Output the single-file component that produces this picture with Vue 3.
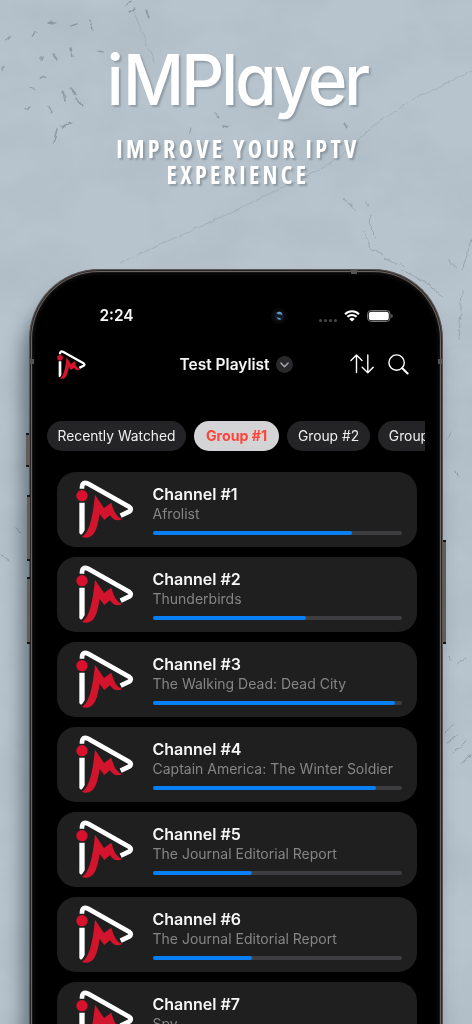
<script setup>
const groups = [
  { name: 'Recently Watched', kind: 'recent' },
  { name: 'Group #1', kind: 'active' },
  { name: 'Group #2', kind: '' },
  { name: 'Group #3', kind: '' },
]
const channels = [
  { show: 'Afrolist', progress: 80 },
  { show: 'Thunderbirds', progress: 61.5 },
  { show: 'The Walking Dead: Dead City', progress: 97.5 },
  { show: 'Captain America: The Winter Soldier', progress: 89.8 },
  { show: 'The Journal Editorial Report', progress: 39.8 },
  { show: 'The Journal Editorial Report', progress: 39.8 },
  { show: 'Spy', progress: 50 },
]
</script>

<template>
  <main class="page">
    <svg class="stone" viewBox="0 0 472 1024" aria-hidden="true">
      <defs>
        <filter id="mottle" x="0" y="0" width="100%" height="100%">
          <feTurbulence type="fractalNoise" baseFrequency="0.012 0.016" numOctaves="6" seed="8" />
          <feColorMatrix values="0 0 0 0 .38  0 0 0 0 .44  0 0 0 0 .49  .8 0 0 0 -.3" />
        </filter>
        <filter id="rough" x="-10%" y="-10%" width="120%" height="120%">
          <feTurbulence type="fractalNoise" baseFrequency="0.12" numOctaves="3" seed="4" />
          <feDisplacementMap in="SourceGraphic" scale="5" xChannelSelector="R" yChannelSelector="G" />
        </filter>
      </defs>
      <rect width="472" height="1024" fill="#b8c4cd" />
      <rect width="472" height="1024" filter="url(#mottle)" />
      <g fill="none" stroke="#6f7b84" stroke-width=".8" opacity=".5" filter="url(#rough)">
        <path d="M472 71L414 99 373 126 340 158 300 180 242 207 200 227 170 240 120 263" opacity=".65" />
        <path d="M344 198L357 213M365 201L368 206M371 215L370 226 376 239M363 231L371 248 383 256M384 258L405 266M402 270L425 282 442 297M448 260L457 268M472 240L462 270M462 290L459 340" />
        <path d="M133 10L140 27 146 42 154 63" opacity=".6" />
      </g>
      <g fill="none" stroke="#5d6971" stroke-width="1.6" stroke-linecap="round" opacity=".45" filter="url(#rough)">
        <path d="M127 6L132 2M129 12L135 9M145 10L149 17M48 23L55 24M70 26L77 24M89 20L93 29M37 31L31 36M54 53L57 60M71 48L73 57M98 51L103 52M42 57L41 60M31 88L35 89M40 79L45 77M25 109L31 107M63 91L65 101M71 88L76 94M77 97L82 106M49 107L52 112M57 129L53 143M62 127L71 122M6 40L10 37M2 70L4 66M190 128L189 133M223 126L228 127M215 114L219 117M345 123L348 128" stroke-width="1.5" />
        <path d="M445 733L454 725M447 743L458 735M452 754L466 741M461 763L470 755M449 657L451 660M459 663L466 658M2 555L10 561M16 528L22 532M456 470L458 476M448 438L451 433" stroke-width="1" />
      </g>
    </svg>

    <header class="hero">
      <h1><span>i</span>MPlayer</h1>
      <p>IMPROVE YOUR IPTV<br>EXPERIENCE</p>
    </header>

    <section class="phone">
      <i class="key mute"></i><i class="key up"></i><i class="key down"></i><i class="key power"></i>
      <i class="band top"></i><i class="band left"></i><i class="band right"></i>
      <div class="screen">
        <div class="status">
          <time>2:24</time>
          <span class="camera">
            <svg viewBox="0 0 16 16"><circle cx="8" cy="8" r="8" fill="#090909" /><circle cx="8" cy="8" r="4.8" fill="#101b2a" /><path d="M5.5 5Q8 3 10.5 4.5L11.5 7.5Q9 5.5 7.5 6.5ZM5.5 9.5Q8 13 10.5 11Q8.5 9 5.5 9.5Z" fill="#6299c2" /></svg>
          </span>
          <span class="signal"><i></i><i></i><i></i><i></i></span>
          <svg class="wifi" viewBox="0 0 16 12">
            <path d="M1 4.2A10 10 0 0 1 15 4.2M3.4 6.8A6.5 6.5 0 0 1 12.6 6.8" fill="none" stroke="#fff" stroke-width="2" />
            <path d="M8 11.6L5.3 8.9A4 4 0 0 1 10.7 8.9Z" fill="#fff" />
          </svg>
          <svg class="battery" viewBox="0 0 26 12">
            <rect x=".5" y=".5" width="22.6" height="11" rx="3.7" fill="none" stroke="#777" />
            <rect x="1.8" y="1.8" width="20" height="8.4" rx="2.5" fill="#fff" />
            <path d="M24.4 4.1Q25.7 4.6 25.7 6T24.4 7.9Z" fill="#777" />
          </svg>
        </div>

        <nav class="toolbar">
          <svg class="logo small" viewBox="47 31 174 174"><use href="#im-mark" /></svg>
          <strong>Test Playlist</strong>
          <svg class="chevron" viewBox="0 0 17 17"><circle cx="8.5" cy="8.5" r="8.5" fill="#29292c" /><path d="M4.9 7L8.5 10.7 12.1 7" fill="none" stroke="#aaaab0" stroke-width="1.4" stroke-linecap="round" stroke-linejoin="round" /></svg>
          <svg class="sort" viewBox="0 0 24 20"><path d="M6.5 18.5V1M1 6.5L6.5 1 12 6.5M17.8 1V18.7M12.2 13.2L17.8 18.7 23.2 13.2" fill="none" stroke="#fff" stroke-width="1.4" stroke-linecap="round" stroke-linejoin="round" /></svg>
          <svg class="search" viewBox="0 0 21 21"><circle cx="8.6" cy="8.6" r="7.7" fill="none" stroke="#fff" stroke-width="1.4" /><path d="M14.3 14.3L19.6 19.5" stroke="#fff" stroke-width="2" stroke-linecap="round" /></svg>
        </nav>

        <div class="groups">
          <span v-for="g in groups" :key="g.name" :class="['pill', g.kind]">{{ g.name }}</span>
        </div>

        <div class="channels">
          <article v-for="(c, i) in channels" :key="i" class="card">
            <svg class="logo" viewBox="47 31 174 174">
              <g v-if="i === 0" id="im-mark">
                <path d="M65 57V53Q66 34 83 42L206 111Q217 119 206 126L181 138" fill="none" stroke="#fff" stroke-width="14" />
                <path d="M57 99H73V181Q66 195 62 195Q57 194 57 188Z" fill="#fff" />
                <circle cx="65" cy="78" r="17" fill="#d8122c" />
                <path d="M65 201C86 190 97 145 104 75L131 115 153 99Q164 143 186 148Q163 160 149 137L132 151 118 133C111 180 100 206 76 204Q70 204 65 201Z" fill="#d3142d" />
              </g>
              <use v-else href="#im-mark" />
            </svg>
            <div class="info">
              <h2>Channel #{{ i + 1 }}</h2>
              <p>{{ c.show }}</p>
              <div class="track"><i :style="{ width: c.progress + '%' }"></i></div>
            </div>
          </article>
        </div>
      </div>
    </section>
  </main>
</template>

<style>
body { margin: 0; overflow: hidden; }
</style>

<style scoped>
* { box-sizing: border-box; }
.page { position: relative; width: 472px; height: 1024px; overflow: hidden; font-family: Inter, "Liberation Sans", sans-serif; background: #b5c2cc; }
.stone { position: absolute; inset: 0; width: 472px; height: 1024px; }
.hero { position: relative; height: 269px; padding-top: 39px; color: #fff; text-align: center; }
h1 { margin: 0; height: 82px; font-size: 70px; line-height: 82px; font-weight: 550; letter-spacing: -3.1px; font-feature-settings: "cv11"; text-shadow: 2px 2px 2px #788590a0; white-space: nowrap; transform: translateX(1px) scaleX(.957); }
h1 span { letter-spacing: -.5px; }
.hero p { margin: 15px 0 0 4px; font: 700 24px/26px "Open Sans", sans-serif; font-stretch: 75%; letter-spacing: 3.35px; text-shadow: 2px 2px 2px #788590b0; }
.phone { position: relative; width: 414px; height: 820px; margin-left: 29px; padding: 5px; border-radius: 70px 70px 0 0; background: #080808; border: 1px solid #5b5654; border-bottom: 0; box-shadow: inset 0 0 0 1px #292625, inset 0 0 0 2px #6a6462, inset 0 0 0 3px #151515, -7px 20px 18px #35434f9c; }
.screen { height: 100%; padding: 31px 8px 0 11px; overflow: hidden; border-radius: 65px 65px 0 0; background: #000; color: #f6f6f6; }
.key { position: absolute; width: 3px; background: #635d5a; border: solid #171719; border-width: 2px 0; }
.mute { left: -4px; top: 163px; height: 34px; }
.up { left: -3px; top: 225px; height: 66px; }
.down { left: -3px; top: 307px; height: 67px; }
.power { right: -4px; top: 270px; height: 104px; }
.band { position: absolute; background: #575351; }
.band.top { left: 321px; top: -1px; width: 6px; height: 5px; }
.band.left { left: -1px; top: 89px; width: 5px; height: 5px; }
.band.right { right: -1px; top: 89px; width: 5px; height: 5px; }
.status { display: flex; align-items: center; height: 20px; margin-left: 53.5px; }
time { width: 171px; font-size: 15.4px; font-weight: 600; line-height: 20px; }
.camera { width: 16px; height: 16px; }
.camera svg { display: block; width: 16px; height: 16px; }
.signal { display: flex; gap: 1.8px; margin: 9px 0 0 32px; }
.signal i { width: 3.3px; height: 3.3px; border-radius: 50%; background: #48484a; }
.wifi { width: 16px; height: 12px; margin-left: 7px; }
.battery { width: 26px; height: 12px; margin-left: 7px; }
.toolbar { display: flex; align-items: center; height: 30px; margin-top: 23px; padding-left: 10.5px; }
.logo.small { width: 29px; height: 29px; }
.toolbar strong { width: 90px; margin-left: 94px; font-size: 15.5px; font-weight: 600; white-space: nowrap; }
.chevron { width: 17px; height: 17px; margin-left: 6.5px; }
.sort { width: 24px; height: 20px; margin-left: 57px; }
.search { width: 21px; height: 21px; margin-left: 14px; }
.groups { display: flex; gap: 8px; width: 378px; margin-top: 42px; margin-left: 1px; overflow: hidden; }
.pill { flex: none; width: 83px; height: 30px; border-radius: 15px; background: #242426; text-align: center; font-size: 13.8px; line-height: 30px; white-space: nowrap; color: #eee; }
.pill.recent { width: 139px; }
.pill.active { width: 85px; background: #d4d4d6; color: #ff453a; font-size: 14.2px; font-weight: 700; }
.channels { margin: 20.5px 0 0 10.5px; }
.card { display: flex; width: 360px; height: 75px; margin-bottom: 10.1px; padding-left: 19px; border-radius: 19px; background: #1f1f1f; }
.card .logo { width: 58px; height: 58px; margin-top: 8px; }
.info { width: 249px; margin-left: 19px; padding-top: 12px; }
.info h2 { margin: 0; font-size: 16px; line-height: 20px; font-weight: 600; }
.info p { margin: 1px 0 0; font-size: 14px; line-height: 18px; color: #858585; white-space: nowrap; }
.track { height: 4px; margin-top: 8px; border-radius: 2px; background: #3e3e40; }
.track i { display: block; height: 4px; border-radius: 2px; background: #087ff5; }
</style>
